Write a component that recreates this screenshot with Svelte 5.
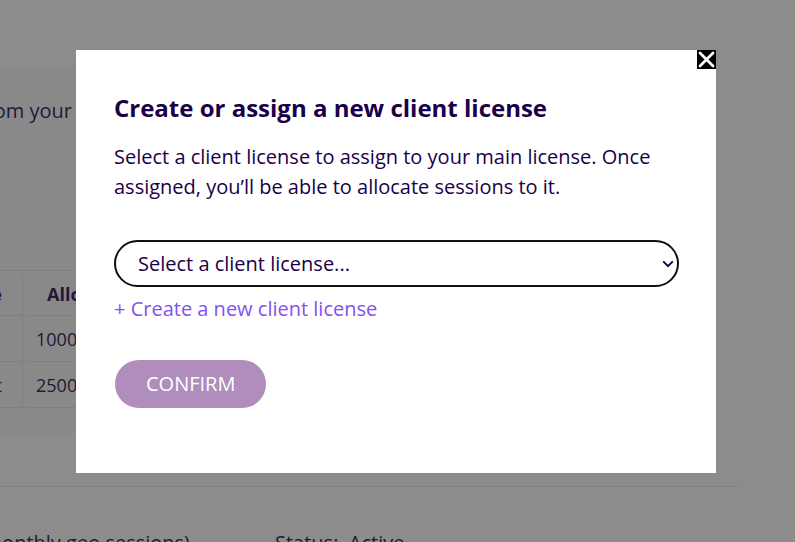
<script>
  let selected = $state('');
  const allocations = [
    { name: 'Enterprise', sessions: '1000' },
    { name: 'Test client', sessions: '2500' },
  ];
</script>

<div class="screen">
  <main class="page" aria-hidden="true">
    <section class="card">
      <p class="intro"><span>Allocate sessions from your</span></p>
      <table class="allocations">
        <thead>
          <tr><th class="name"><span>License type</span></th><th>Allocated</th></tr>
        </thead>
        <tbody>
          {#each allocations as row, i}
            <tr>
              <td class="name">{#if i === 1}<span>{row.name}</span>{/if}</td>
              <td class="sessions">{row.sessions}</td>
            </tr>
          {/each}
        </tbody>
      </table>
    </section>
    <div class="summary">
      <div class="plan"><span>(monthly geo sessions)</span></div>
      <div class="status">Status:&nbsp; Active</div>
    </div>
  </main>

  <div class="overlay">
    <div class="modal" role="dialog" aria-modal="true" aria-labelledby="dialog-title">
      <button class="close" type="button" aria-label="Close">
        <svg viewBox="0 0 19 19" width="19" height="19" aria-hidden="true">
          <path d="M3 3 16 16M16 3 3 16" fill="none" stroke="#fff" stroke-width="2.8" stroke-linecap="round" />
        </svg>
      </button>
      <h2 id="dialog-title">Create or assign a new client license</h2>
      <p class="text">Select a client license to assign to your main license. Once assigned, you’ll be able to allocate sessions to it.</p>
      <div class="field">
        <select bind:value={selected} aria-label="Client license">
          <option value="">Select a client license...</option>
        </select>
        <svg class="chevron" viewBox="0 0 12 8" width="12" height="8" aria-hidden="true">
          <path d="M1.2 1.4 6 6.2 10.8 1.4" fill="none" stroke="#1a0049" stroke-width="2" />
        </svg>
      </div>
      <a class="create" href="#create">+ Create a new client license</a>
      <button class="confirm" type="button">CONFIRM</button>
    </div>
  </div>
</div>

<style>
  .screen {
    position: relative;
    height: 100vh;
    overflow: hidden;
    background: #fff;
    color: #1a0049;
    font: 20px/30px "Open Sans", sans-serif;
  }
  * { box-sizing: border-box; }
  p, h2 { margin: 0; }
  .page { padding-top: 66px; }
  .card {
    width: 88%;
    padding: 30px 0 24px;
    background: #f8f8f8;
  }
  .intro, .name, .plan {
    overflow: hidden;
    white-space: nowrap;
  }
  .intro {
    display: flex;
    justify-content: flex-end;
    width: 72px;
  }
  .allocations {
    width: 100%;
    margin: 144px 0 0 -2px;
    border-collapse: separate;
    border-spacing: 2px;
    border-top: 1px solid #e2e2e2;
    table-layout: fixed;
    font-size: 18px;
    line-height: 27px;
  }
  th, td {
    height: 44px;
    padding: 0 11px;
    border-bottom: 1px solid #e2e2e2;
    text-align: left;
  }
  th {
    height: 43px;
    padding-left: 22px;
  }
  .allocations .name {
    width: 23px;
    padding: 0;
    border-right: 1px solid #e2e2e2;
  }
  .name span {
    display: flex;
    justify-content: flex-end;
    width: 2px;
  }
  .summary {
    display: flex;
    gap: 2px;
    margin: 52px 57px 0 0;
  }
  .summary div {
    padding-top: 41px;
    border-top: 1px solid #e2e2e2;
  }
  .plan {
    display: flex;
    flex: 0 0 248px;
    justify-content: flex-end;
    padding-right: 58px;
  }
  .status { flex: 1; padding-left: 25px; }

  .overlay {
    position: absolute;
    inset: 0;
    padding: 50px 79px 0 76px;
    background: rgba(43, 43, 43, 0.54);
  }
  .modal {
    position: relative;
    display: flex;
    flex-direction: column;
    align-items: flex-start;
    max-width: 640px;
    padding: 40px 37px 65px 38px;
    background: #fff;
  }
  .close {
    position: absolute;
    top: 0;
    right: 0;
    width: 19px;
    height: 19px;
    padding: 0;
    border: 0;
    background: #000;
  }
  .close svg { display: block; }
  h2 {
    font-size: 24px;
    line-height: 36px;
    font-weight: 700;
  }
  .text { margin-top: 16px; }
  .field {
    position: relative;
    width: 100%;
    margin-top: 38px;
  }
  select {
    appearance: none;
    display: block;
    width: 100%;
    height: 47px;
    padding: 0 24px 0 22px;
    border: 2px solid #101010;
    border-radius: 24px;
    outline: 0;
    background: #fff;
    color: #1a0049;
    font: inherit;
  }
  .chevron {
    position: absolute;
    top: 20px;
    right: 5px;
    pointer-events: none;
  }
  .create {
    margin-top: 7px;
    color: #8650f0;
    text-decoration: none;
  }
  .confirm {
    height: 48px;
    margin: 36px 0 0 1px;
    padding: 0 31px;
    border: 0;
    border-radius: 24px;
    background: #b08dbc;
    color: #fff;
    font: inherit;
  }
</style>
